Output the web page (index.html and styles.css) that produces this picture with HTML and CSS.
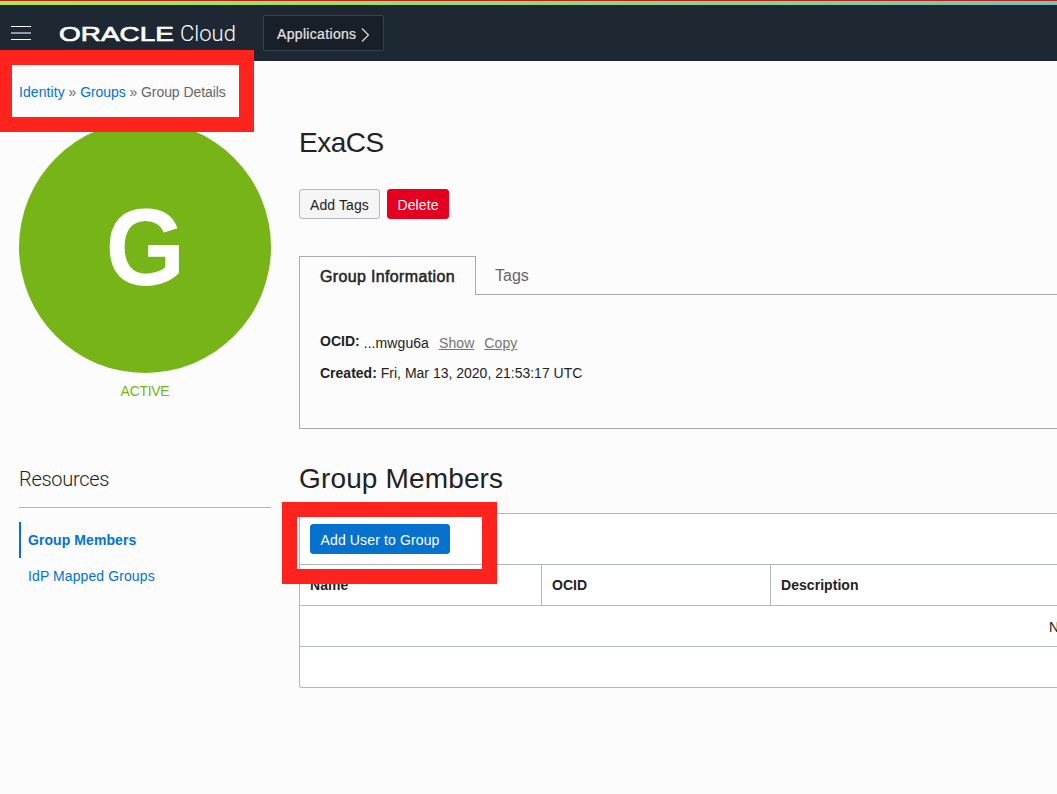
FILE: index.html
```html
<!DOCTYPE html>
<html lang="en">
<head>
<meta charset="utf-8">
<title>Group Details</title>
<link rel="stylesheet" href="styles.css">
</head>
<body>
<header class="topbar">
  <svg class="menu" width="20" height="16" viewBox="0 0 20 16"><path d="M0 1.5h20M0 14.5h20" stroke="#fff"/><path d="M0 8h20" stroke="#9499a0" stroke-width="2"/></svg>
  <div class="brand"><span class="oracle">ORACLE</span><span class="cloud">Cloud</span></div>
  <button class="apps"><span class="t-apps">Applications</span>
    <svg width="9" height="14" viewBox="0 0 9 14"><path d="M1 .5L7.5 7L1 13.5" fill="none" stroke="#e4e5e6" stroke-width="1.1"/></svg>
  </button>
</header>
<div class="page">
  <aside class="side">
    <nav class="crumbs"><a class="t-identity">Identity</a> » <a>Groups</a> » <span>Group Details</span></nav>
    <div class="avatar"><span>G</span></div>
    <div class="status">ACTIVE</div>
    <h2 class="res-title"><span>Resources</span></h2>
    <ul class="res">
      <li class="on"><span>Group Members</span></li>
      <li><span>IdP Mapped Groups</span></li>
    </ul>
  </aside>
  <main class="main">
    <h1 class="title"><span class="t-exa">ExaCS</span></h1>
    <div class="actions">
      <button class="btn tags"><span>Add Tags</span></button>
      <button class="btn delete"><span>Delete</span></button>
    </div>
    <div class="tabs">
      <div class="tab active"><span>Group Information</span></div>
      <div class="tab"><span>Tags</span></div>
    </div>
    <section class="panel">
      <div class="row"><b class="t-ocid">OCID:</b><span class="low t-mw">...mwgu6a</span><a class="low t-show">Show</a><a class="low t-copy">Copy</a></div>
      <div class="row"><b class="t-created">Created:</b><span class="t-date">Fri, Mar 13, 2020, 21:53:17 UTC</span></div>
    </section>
    <h1 class="title members"><span>Group Members</span></h1>
    <section class="table">
      <div class="tools"><button class="btn add"><span>Add User to Group</span></button></div>
      <div class="head"><div>Name</div><div>OCID</div><div>Description</div></div>
      <div class="empty">N</div>
      <div class="foot"></div>
    </section>
  </main>
</div>
<div class="mark mark-crumbs"></div>
<div class="mark mark-add"></div>
</body>
</html>
```
FILE: styles.css
```css
* { box-sizing: border-box; }
body {
  margin: 0;
  width: 1057px;
  height: 794px;
  overflow: hidden;
  position: relative;
  background: #fcfcfc;
  color: #222;
  font: 14px/20px "Liberation Sans", Arial, sans-serif;
}
h1, h2, ul { margin: 0; padding: 0; font-weight: 400; }
button { font: inherit; color: inherit; padding: 0; margin: 0; }
span, b, a { white-space: nowrap; }

.topbar {
  height: 61px;
  display: flex;
  align-items: flex-start;
  padding: 15px 0 0 11px;
  background:
    linear-gradient(#b9251f, #b9251f) 0 0 / 100% 1px no-repeat,
    linear-gradient(90deg, #b4e550, #9ed977 40%, #8ccd9a 75%, #7dc0b8) 0 1px / 100% 4px no-repeat,
    #1e2832;
}
.menu { margin-top: 10px; flex: none; }
.brand { display: flex; width: 204px; margin-left: 28px; margin-top: 6px; color: #fff; line-height: 26px; }
.oracle { width: 121px; font-size: 21px; transform: scaleX(1.33); transform-origin: 0 50%; -webkit-text-stroke: .7px #fff; }
.cloud { font-family: Roboto, "Liberation Sans", sans-serif; font-weight: 300; font-size: 22px; }
.apps {
  width: 121px; height: 36px;
  display: flex; align-items: center; justify-content: space-between;
  padding: 3px 13px 1px;
  background: #181f27; border: 1px solid #37414c; border-radius: 2px; color: #e4e5e6;
}
.apps svg { margin-top: 2px; }
.t-apps { -webkit-text-stroke: .2px #e4e5e6; letter-spacing: .33px; }

.page { display: grid; grid-template-columns: 252px 758px; column-gap: 28px; padding-left: 19px; }
.crumbs { padding-top: 21px; height: 60px; color: #666; letter-spacing: -.07px; }
.crumbs a { color: #0572ce; }
.crumbs .t-identity { letter-spacing: .08px; }
.avatar {
  width: 252px; height: 252px; border-radius: 50%;
  background: #77b418; color: #fff;
  font-size: 109px; font-weight: 700; line-height: 253px; text-align: center;
}
.avatar span { display: inline-block; transform: scaleX(.94); }
.status { margin-top: 8px; color: #77b418; text-align: center; letter-spacing: -.3px; }
.res-title { margin-top: 64px; height: 43px; border-bottom: 1px solid #aeb6c1; font: 300 20px/29px Roboto, sans-serif; letter-spacing: -.3px; }
.res { list-style: none; margin-top: 14px; color: #0572ce; }
.res li { height: 36px; line-height: 36px; padding-left: 9px; letter-spacing: .1px; }
.res .on { border-left: 2px solid #0572ce; padding-left: 7px; font-weight: 700; letter-spacing: .07px; }

.title { font-size: 28px; line-height: 32px; padding-top: 66px; height: 128px; }
.t-exa { letter-spacing: -.5px; }
.actions { display: flex; gap: 7px; }
.btn { height: 30px; border: 1px solid; border-radius: 3px; padding-top: 2px; letter-spacing: .1px; }
.tags { width: 81px; background: #f5f5f5; border-color: #b0b7c3; }
.delete { width: 62px; background: #e5001f; border-color: #e5001f; color: #fff; }
.tabs { display: flex; margin-top: 37px; height: 39px; font-size: 16px; line-height: 38px; color: #666; }
.tab { flex: 1; padding: 1px 0 0 19px; border-bottom: 1px solid #aaa; }
.tab.active {
  flex: none; width: 177px; padding-left: 20px; border: 1px solid #aaa; border-bottom: 0;
  color: #222; -webkit-text-stroke: .5px #222; letter-spacing: .35px;
}
.panel { height: 134px; border: solid #aaa; border-width: 0 0 1px 1px; padding: 36px 0 0 20px; }
.row { display: flex; height: 32px; }
.row .low { padding-top: 2px; height: 22px; letter-spacing: .08px; }
.row b { margin-right: 4px; }
.row a { color: #757575; text-decoration: underline; margin-left: 10px; }
.members { padding-top: 34px; height: 84px; letter-spacing: .15px; }

.table { background: #fff; border: 1px solid #b0b7c3; border-right: 0; border-radius: 3px 0 0 3px; height: 175px; }
.tools { height: 50px; padding: 10px; }
.add { width: 140px; display: block; background: #0572ce; border-color: #0572ce; color: #fff; letter-spacing: .13px; }
.head { display: grid; grid-template-columns: 242px 229px 1fr; height: 41px; border-top: 1px solid #b0b7c3; font-weight: 700; line-height: 41px; letter-spacing: .05px; }
.head div { padding-left: 10px; border-right: 1px solid #b0b7c3; }
.head div:last-child { border-right: 0; }
.empty { height: 41px; border-top: 1px solid #b0b7c3; line-height: 43px; padding-left: 749px; white-space: nowrap; overflow: hidden; }
.foot { border-top: 1px solid #b0b7c3; }

.mark { position: absolute; border: 15px solid #ff231d; }
.mark-crumbs { left: 0; top: 50px; width: 254px; height: 82px; border-left-width: 12px; }
.mark-add { left: 282px; top: 502px; width: 215px; height: 82px; }
```
